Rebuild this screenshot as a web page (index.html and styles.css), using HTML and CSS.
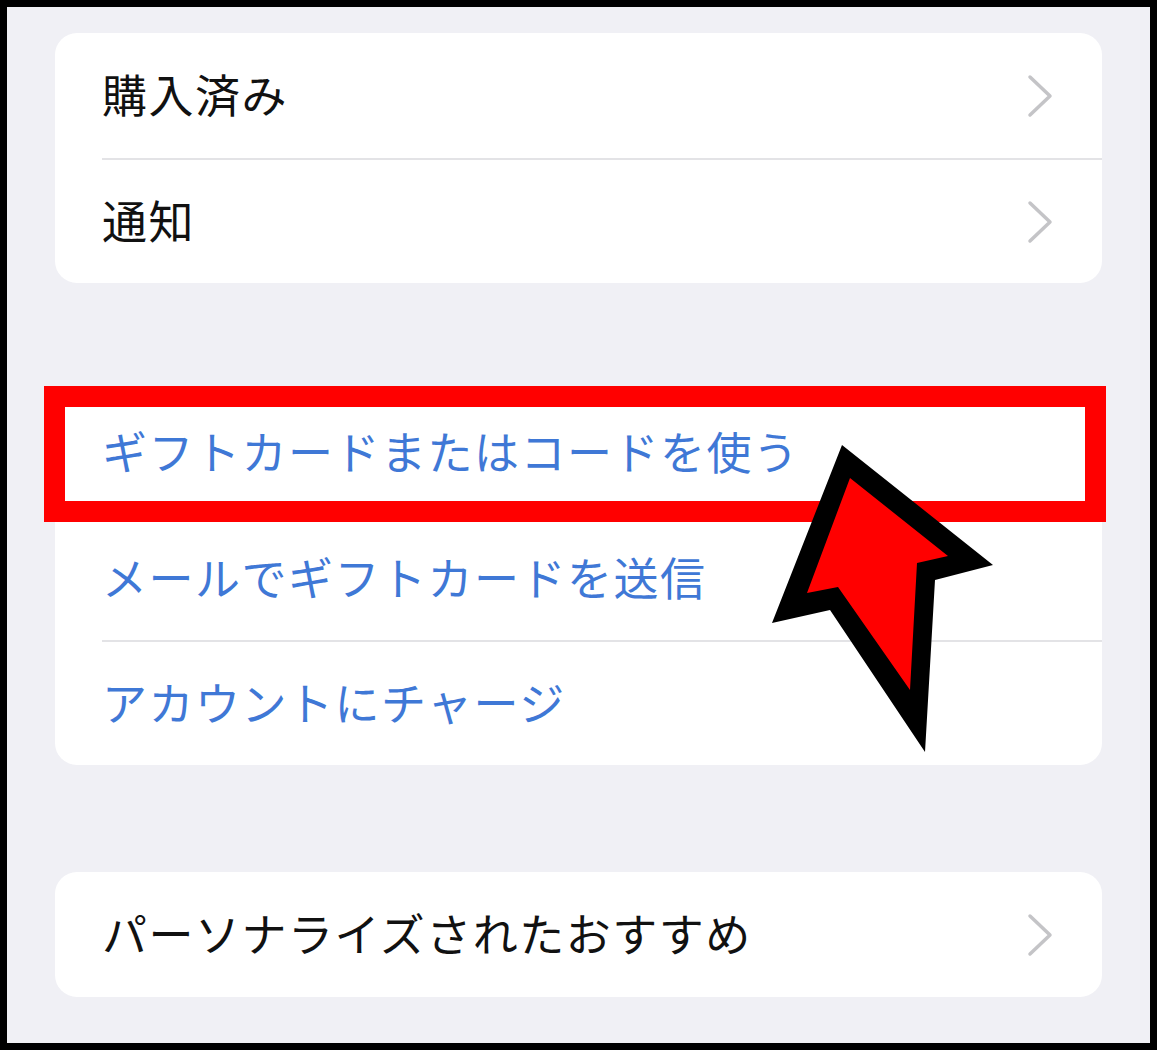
FILE: index.html
```html
<!DOCTYPE html>
<html lang="ja">
  <head>
    <meta charset="utf-8">
    <title>アカウント</title>
    <link rel="stylesheet" href="styles.css">
  </head>
  <body>
    <div class="frame">
      <div class="group">
        <div class="row">
          <span class="label">購入済み</span>
          <svg class="chevron" viewBox="0 0 26 44"><polyline points="3,3 23,22 3,41"/></svg>
        </div>
        <div class="row">
          <span class="label">通知</span>
          <svg class="chevron" viewBox="0 0 26 44"><polyline points="3,3 23,22 3,41"/></svg>
        </div>
      </div>

      <div class="group">
        <div class="row"><span class="label link">ギフトカードまたはコードを使う</span></div>
        <div class="row"><span class="label link">メールでギフトカードを送信</span></div>
        <div class="row"><span class="label link">アカウントにチャージ</span></div>
      </div>

      <div class="group">
        <div class="row">
          <span class="label">パーソナライズされたおすすめ</span>
          <svg class="chevron" viewBox="0 0 26 44"><polyline points="3,3 23,22 3,41"/></svg>
        </div>
      </div>

      <!-- highlight box and pointer drawn on top -->
      <div class="highlight"></div>
      <svg class="pointer" width="235" height="320" viewBox="0 0 235 320">
        <polygon class="pointer-edge" points="77,5 228,125 170,140 160,312 65,170 7,183"/>
        <polygon class="pointer-fill" points="85,38 183,116 152,123 145,250 73,147 42,153"/>
      </svg>
    </div>
  </body>
</html>
```

FILE: styles.css
```css
* {
  box-sizing: border-box;
}

body {
  margin: 0;
  font-family: "Noto Sans CJK JP", "Noto Sans", sans-serif;
}

.frame {
  position: relative;
  width: 1157px;
  height: 1050px;
  border: 7px solid #000;
  background: #f0f0f5;
  padding: 26px 48px 0 48px;
  overflow: hidden;
}

.group {
  background: #fff;
  border-radius: 22px;
  margin-bottom: 107px;
}

.row {
  display: flex;
  align-items: center;
  justify-content: space-between;
  height: 125px;
  margin-left: 47px;
  padding-right: 49px;
}

.row + .row {
  border-top: 2px solid #e3e3e6;
}

.label {
  font-size: 45px;
  letter-spacing: 1.5px;
  color: #111;
  line-height: 1;
  padding-bottom: 5px;
}

.label.link {
  color: #3f78d6;
}

.chevron {
  width: 26px;
  height: 44px;
  fill: none;
  stroke: #c4c4c7;
  stroke-width: 3.5;
  stroke-linecap: round;
  stroke-linejoin: round;
}

.highlight {
  position: absolute;
  left: 37px;
  top: 379px;
  width: 1062px;
  height: 136px;
  border: 21px solid #ff0000;
}

.pointer {
  position: absolute;
  left: 758px;
  top: 433px;
}

.pointer-edge {
  fill: #000;
}

.pointer-fill {
  fill: #ff0000;
}
```
